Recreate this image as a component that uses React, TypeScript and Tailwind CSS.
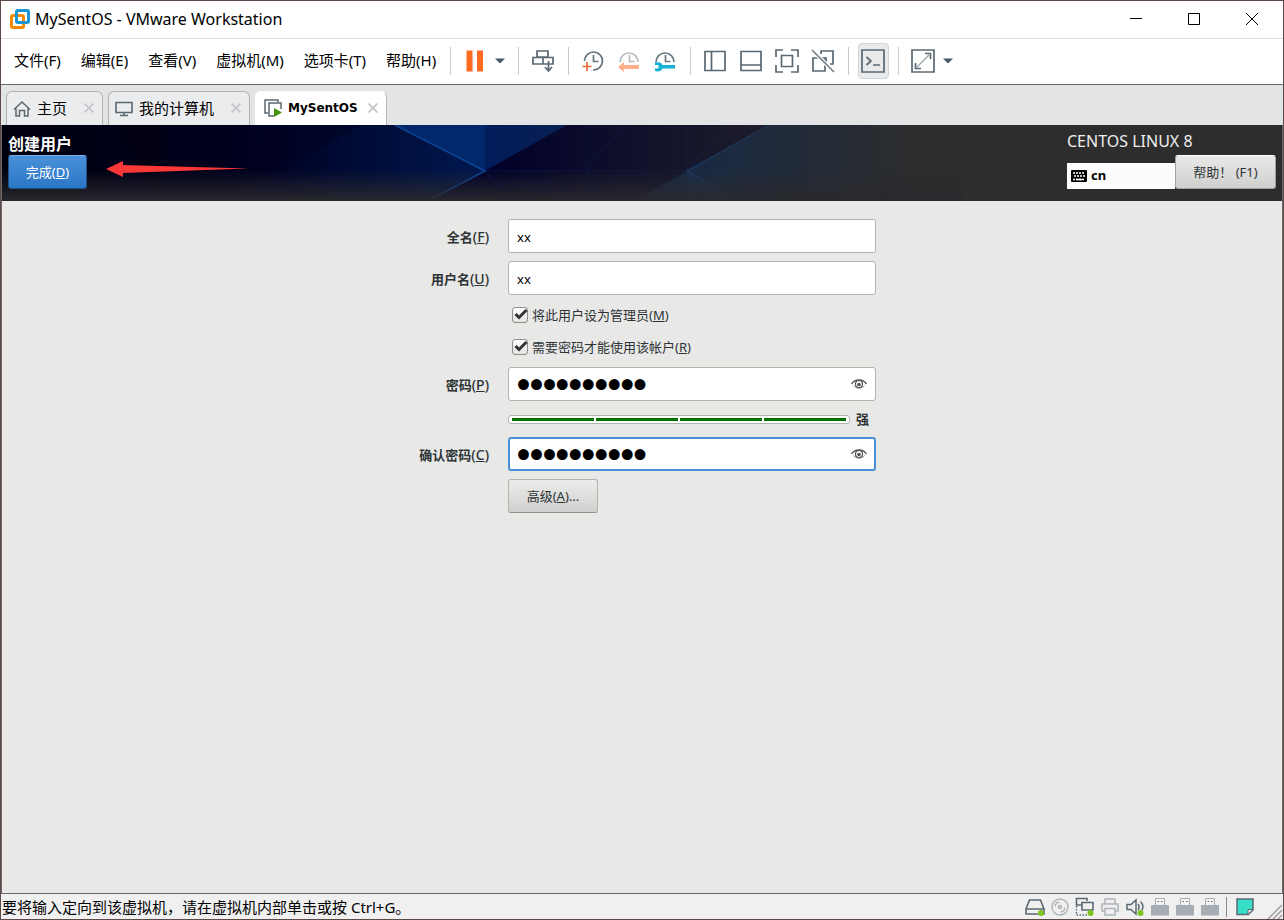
import { useState } from 'react'
import type { ReactNode } from 'react'
import clsx from 'clsx'

const MENUS = ['文件(F)', '编辑(E)', '查看(V)', '虚拟机(M)', '选项卡(T)', '帮助(H)']

interface IconProps {
  children: ReactNode
  size?: number
}

function Icon({ children, size = 24 }: IconProps) {
  return (
    <svg width={size} height={size} viewBox={`0 0 ${size} ${size}`} fill="none" stroke="#5a6872" strokeWidth="1.700" aria-hidden="true" className="shrink-0">
      {children}
    </svg>
  )
}

function ToolButton({ label, active, children }: { label: string; active?: boolean; children: ReactNode }) {
  return (
    <button type="button" aria-label={label} className="flex h-9 w-9 items-center justify-center">
      <span className={clsx('flex h-9 w-[31px] items-center justify-center rounded border', active ? 'border-[#d3d4d6] bg-[#e9eaec]' : 'border-transparent')}>
        {children}
      </span>
    </button>
  )
}

function Divider() {
  return <div className="mr-1.5 ml-[7px] h-7 w-px bg-[#c8c9cb]" />
}

function Caret({ label }: { label: string }) {
  return (
    <button type="button" aria-label={label} className="flex h-9 w-[18px] items-center pl-0.5">
      <svg width="10" height="6" viewBox="0 0 10 6" aria-hidden="true">
        <path d="M0 0.500h10L5 5.500z" fill="#465864" />
      </svg>
    </button>
  )
}

function Clock({ faded }: { faded?: boolean }) {
  return (
    <g stroke={faded ? '#b4bbc0' : '#66747d'}>
      <path d="M12.500 6v6.500h5" />
      <path d="M3 13a9 9 0 1 1 18 0" />
    </g>
  )
}

function TitleBar() {
  return (
    <header className="flex h-[38px] items-center border-b border-[#e0e0e0] pr-0.5 pb-0.5 pl-2">
      <svg width="22" height="22" viewBox="0 0 22 22" fill="none" strokeWidth="3" aria-hidden="true">
        <rect x="7.500" y="2.500" width="12" height="12" rx="1.500" stroke="#1c96d2" />
        <rect x="2.500" y="7.500" width="12" height="12" rx="1.500" stroke="#f38b00" />
        <path d="M7.500 6v5.500M12 14.500h4" stroke="#1c96d2" />
      </svg>
      <h1 className="ml-1 text-base leading-5">MySentOS - VMware Workstation</h1>
      <div className="ml-auto flex text-black">
        {[
          { label: '最小化', d: 'M0 5.500h12' },
          { label: '最大化', d: 'M0.500 0.500h11v11h-11z' },
          { label: '关闭', d: 'M0 0l12 12M12 0L0 12' },
        ].map((b) => (
          <button key={b.label} type="button" aria-label={b.label} className="flex h-9 w-[58px] items-center justify-center">
            <svg width="12" height="12" viewBox="0 0 12 12" fill="none" stroke="#000" aria-hidden="true">
              <path d={b.d} />
            </svg>
          </button>
        ))}
      </div>
    </header>
  )
}

function MenuBar() {
  return (
    <div className="flex h-[46px] items-center border-b border-[#6a6a6a] pb-0.5 pl-[13px]">
      <nav className="flex gap-5 pr-[7px] pb-0.5">
        {MENUS.map((m) => (
          <button key={m} type="button" className="text-[15px] leading-5 whitespace-nowrap">
            {m}
          </button>
        ))}
      </nav>
      <Divider />
      <ToolButton label="挂起">
        <Icon>
          <path d="M6.500 1.500v21M17 1.500v21" stroke="#fd6a21" strokeWidth="6" />
        </Icon>
      </ToolButton>
      <Caret label="电源选项" />
      <Divider />
      <ToolButton label="发送 Ctrl+Alt+Del">
        <Icon>
          <path d="M6 2h11v6H6zM2 8.500h20V15H2zM12 8.500V15" />
          <path d="M17.500 12v9M14 18l3.500 4 3.500-4" />
        </Icon>
      </ToolButton>
      <Divider />
      <ToolButton label="拍摄快照">
        <Icon>
          <g stroke="#66747d">
            <path d="M12.500 6v6.500h5" />
            <path d="M3.500 12a9 9 0 1 1 8.500 9" />
          </g>
          <path d="M6 13v9M1.500 17.500h9" stroke="#f0673a" />
        </Icon>
      </ToolButton>
      <ToolButton label="恢复快照">
        <Icon>
          <Clock faded />
          <path d="M1 18l6-5v3h15v4H7v3z" fill="#ffb08b" stroke="none" />
        </Icon>
      </ToolButton>
      <ToolButton label="管理快照">
        <Icon>
          <Clock />
          <path d="M2 13.500c4-1 7 .5 7.500 2.500H22v3.500H9.500c-1 2.500-4.500 3.500-7.500 2.500v-2.500h3.500V16H2z" fill="#14b2d4" stroke="none" />
        </Icon>
      </ToolButton>
      <Divider />
      <ToolButton label="显示库">
        <Icon>
          <path d="M2 2.500h20v19H2zM8.500 2v20" />
        </Icon>
      </ToolButton>
      <ToolButton label="显示缩略图栏">
        <Icon>
          <path d="M2 2.500h20v19H2zM2 16h20" />
        </Icon>
      </ToolButton>
      <ToolButton label="全屏">
        <Icon>
          <path d="M6.500 6.500h11v11h-11zM1 8V1h7M16 1h7v7M23 16v7h-7M8 23H1v-7" />
        </Icon>
      </ToolButton>
      <ToolButton label="Unity 模式">
        <Icon>
          <path d="M10 5V2h12v13h-3M14 9v13H2V9h5M9 9h6v5" />
          <path d="M1 1l22 22" stroke="#fff" strokeWidth="4" />
          <path d="M1 1l22 22" stroke="#77838b" />
        </Icon>
      </ToolButton>
      <Divider />
      <ToolButton label="控制台视图" active>
        <Icon>
          <path d="M1 1h22v22H1z" />
          <path d="M5.500 8l4.500 4-4.500 4M12 16h7" />
        </Icon>
      </ToolButton>
      <Divider />
      <ToolButton label="拉伸客户机">
        <Icon>
          <path d="M1 1h22v22H1z" />
          <path d="M14 4.500h5.500V10M4.500 14v5.500H10" />
          <path d="M6 18L19 5" stroke="#a0a9af" strokeWidth="1.500" />
        </Icon>
      </ToolButton>
      <Caret label="拉伸选项" />
    </div>
  )
}

function Tab({ label, active, icon }: { label: string; active?: boolean; icon: ReactNode }) {
  return (
    <div
      className={clsx(
        'flex h-[34px] items-center rounded-t-md border border-b-0 pr-2 pb-0.5',
        active ? 'border-white border-r-[#b5b6b8] bg-white pl-2' : 'border-[#b0b1b3] bg-[#ebecee] pl-1.5',
      )}
    >
      <button type="button" className="flex items-center gap-1.5 whitespace-nowrap">
        {icon}
        <span className={active ? 'font-["DejaVu_Sans"] text-xs font-bold' : 'text-[15px] leading-5'}>{label}</span>
      </button>
      <button type="button" aria-label={`关闭 ${label}`} className={clsx('flex w-[10px] justify-center', active ? 'ml-2.5' : 'ml-[17px]')}>
        <svg width="10" height="10" viewBox="0 0 10 10" stroke="#c6c7c9" strokeWidth="1.800" aria-hidden="true">
          <path d="M0.500 0.500l9 9M9.500 0.500l-9 9" />
        </svg>
      </button>
    </div>
  )
}

function TabBar() {
  return (
    <div className="flex h-10 items-end gap-[5px] bg-[#e3e4e6] pl-[5px]">
      <Tab
        label="主页"
        icon={
          <Icon size={18}>
            <path d="M1 10.500L9 3l8 7.500M3 9.500V17h3.500v-5.500h5V17H15V9.500" strokeWidth="1.500" />
          </Icon>
        }
      />
      <Tab
        label="我的计算机"
        icon={
          <Icon size={18}>
            <path d="M1 3.500h16v10H1zM9 13.500V17M5 16.500h8" strokeWidth="1.600" />
          </Icon>
        }
      />
      <Tab
        label="MySentOS"
        active
        icon={
          <Icon size={18}>
            <path d="M4 14H1V1h13v2M10 17H5V4h12v6" strokeWidth="1.500" />
            <path d="M10 9l8 4.500-8 4.500z" fill="#46960f" stroke="none" />
          </Icon>
        }
      />
    </div>
  )
}

function Backdrop() {
  return (
    <svg width="960" height="76" viewBox="0 0 960 76" aria-hidden="true" className="absolute top-0 left-0">
      <defs>
        <linearGradient id="base">
          <stop offset="0" stopColor="#00000f" />
          <stop offset="0.250" stopColor="#00001e" />
          <stop offset="0.380" stopColor="#000c38" />
          <stop offset="0.500" stopColor="#00184e" />
        </linearGradient>
        <linearGradient id="fadeRight">
          <stop offset="0.500" stopColor="#2d2d2d" stopOpacity="0" />
          <stop offset="0.700" stopColor="#2d2d2d" stopOpacity="0.450" />
          <stop offset="0.960" stopColor="#2d2d2d" />
        </linearGradient>
        <linearGradient id="fadeDown" x2="0" y2="1">
          <stop offset="0.580" stopColor="#2a292d" stopOpacity="0" />
          <stop offset="1" stopColor="#2a292d" stopOpacity="0.950" />
        </linearGradient>
      </defs>
      <rect width="960" height="76" fill="url(#base)" />
      <path d="M115 0h43v76z" fill="#000009" opacity="0.500" />
      <path d="M360 0L250 60l16-60z" fill="#00001f" opacity="0.400" />
      <path d="M393 0h90v46z" fill="#00286a" />
      <path d="M483 0h82l-82 46z" fill="#001c5a" />
      <path d="M565 0L483 46l-57 30h208l51-30 82-46z" fill="#00002a" />
      <path d="M960 0H767l-82 46-51 30h326z" fill="#052558" />
      <path d="M685 46v30h55z" fill="#083a78" opacity="0.500" />
      <g fill="none" stroke="#0a4596" strokeWidth="1.500">
        <path d="M393 0l90 46-57 30" />
        <path d="M767 0l-82 46 53 30" opacity="0.800" />
        <path d="M483 46h307M584 0v76M685 0v46M584 46l38-46M685 46l40-46M584 46l24 30M483 46l26 30" opacity="0.150" />
      </g>
      <rect width="960" height="76" fill="url(#fadeRight)" />
      <rect width="960" height="76" fill="url(#fadeDown)" />
    </svg>
  )
}

function InstallerHeader() {
  return (
    <div className="relative flex h-[76px] justify-between overflow-hidden bg-[#2d2d2d] px-1.5 pt-[7px]">
      <Backdrop />
      <div className="relative">
        <h2 className="h-[23px] text-base leading-6 font-bold text-white">创建用户</h2>
        <button
          type="button"
          className="h-[34px] w-[79px] rounded-[3px] border border-[#1c5187] border-t-[#75b0ea] bg-linear-to-b from-[#4a90d9] to-[#2a76c6] pt-0.5 text-[13px] text-white"
        >
          完成(<u>D</u>)
        </button>
      </div>
      <svg width="142" height="18" viewBox="0 0 142 18" aria-hidden="true" className="absolute top-[35px] left-[104px]">
        <path d="M0 9L17 1v4l125 3.500L17 13v4z" fill="#fb3838" />
      </svg>
      <div className="relative">
        <p className="h-[23px] text-base leading-[18px] text-[#eeeeee]">CENTOS LINUX 8</p>
        <div className="flex items-end">
          <button type="button" className="flex h-[26px] w-[108px] items-center gap-1 bg-[#fcfcfc] pl-1 text-[13px] font-bold">
            <svg width="16" height="12" viewBox="0 0 16 12" aria-hidden="true">
              <rect width="16" height="12" rx="1" fill="#000" />
              <path d="M2 3h12M3 6h11M2 9.500h12" stroke="#fff" strokeWidth="1.500" strokeDasharray="2 1" />
              <path d="M5 9.500h6" stroke="#fff" strokeWidth="1.500" />
            </svg>
            cn
          </button>
          <button
            type="button"
            className="h-[34px] w-[101px] rounded-[3px] border border-[#a1a19e] border-t-white bg-linear-to-b from-[#e9e9e8] to-[#cfcfcd] pt-0.5 text-[13px] text-[#2e3436]"
          >
            帮助！ (F1)
          </button>
        </div>
      </div>
    </div>
  )
}

function FieldLabel({ htmlFor, text, hotkey }: { htmlFor: string; text: string; hotkey: string }) {
  return (
    <label htmlFor={htmlFor} className="self-center pt-0.5 text-right text-[13px] font-bold whitespace-nowrap text-[#2e3436]">
      {text}
      <span className="text-sm font-medium">
        (<u>{hotkey}</u>)
      </span>
    </label>
  )
}

function CheckRow({ text, hotkey }: { text: string; hotkey: string }) {
  const [checked, setChecked] = useState(true)
  return (
    <label className="relative col-start-2 flex h-6 items-center gap-1 pl-1 text-[13px] text-[#2e3436]">
      <input
        type="checkbox"
        checked={checked}
        onChange={(e) => setChecked(e.target.checked)}
        className="h-4 w-4 appearance-none rounded-[3px] border border-[#8f8f8c] bg-linear-to-b from-white to-[#e4e4e2]"
      />
      {checked && (
        <svg width="16" height="16" viewBox="0 0 16 16" aria-hidden="true" className="pointer-events-none absolute top-1 left-1">
          <path d="M3.500 7l3.500 3.500 7.500-7.500" fill="none" stroke="#2e3436" strokeWidth="3" />
        </svg>
      )}
      <span className="pt-0.5">
        {text}(<u>{hotkey}</u>)
      </span>
    </label>
  )
}

function PasswordField({ id, focused }: { id: string; focused?: boolean }) {
  const [value, setValue] = useState('centos8888')
  const [visible, setVisible] = useState(false)
  return (
    <div className={clsx('flex h-[34px] items-center rounded-[3px] bg-white', focused ? 'border-2 border-[#4a90d9] px-[7px]' : 'border border-[#b3b3b0] px-2')}>
      <input
        id={id}
        type={visible ? 'text' : 'password'}
        value={value}
        onChange={(e) => setValue(e.target.value)}
        className={clsx(
          'h-full min-w-0 flex-1 bg-transparent pt-0.5 text-black outline-none',
          visible ? 'text-[13px]' : 'font-["Liberation_Serif"] text-[37px] [-webkit-text-stroke:2px_black]',
        )}
      />
      <button type="button" aria-label="显示密码" onClick={() => setVisible(!visible)}>
        <svg width="16" height="12" viewBox="0 0 16 12" fill="none" stroke="#4d5153" aria-hidden="true">
          <path d="M0.500 6C4 0.500 12 0.500 15.500 6" strokeWidth="1.300" />
          <circle cx="8" cy="6" r="3.500" strokeWidth="1.200" />
          <circle cx="8" cy="6.500" r="1.800" fill="#4d5153" stroke="none" />
          <path d="M2.500 7.500c3 3.500 8 3.500 11 0" strokeWidth="0.700" />
        </svg>
      </button>
    </div>
  )
}

function UserForm() {
  const [fullName, setFullName] = useState('xx')
  const [userName, setUserName] = useState('xx')
  const inputClass = 'h-[34px] rounded-[3px] border border-[#b3b3b0] bg-white px-2 pt-0.5 text-[13px] text-black'

  return (
    <form className="grid flex-1 grid-cols-[81px_368px] content-start justify-center gap-x-[19px] gap-y-2 bg-[#e8e8e7] pt-[18px]">
      <FieldLabel htmlFor="fullname" text="全名" hotkey="F" />
      <input id="fullname" type="text" value={fullName} onChange={(e) => setFullName(e.target.value)} className={inputClass} />

      <FieldLabel htmlFor="username" text="用户名" hotkey="U" />
      <input id="username" type="text" value={userName} onChange={(e) => setUserName(e.target.value)} className={inputClass} />

      <CheckRow text="将此用户设为管理员" hotkey="M" />
      <CheckRow text="需要密码才能使用该帐户" hotkey="R" />

      <FieldLabel htmlFor="password" text="密码" hotkey="P" />
      <PasswordField id="password" />

      <div className="col-start-2 flex h-5 items-center gap-1.5">
        <div role="meter" aria-label="密码强度" aria-valuenow={4} aria-valuemin={0} aria-valuemax={4} className="flex h-[9px] flex-1 items-center gap-0.5 rounded-[3px] border border-[#b3b3b0] bg-white px-[3px]">
          {[0, 1, 2, 3].map((i) => (
            <span key={i} className="h-[3px] flex-1 border-y border-[#005f00] bg-[#008a00]" />
          ))}
        </div>
        <span className="w-5 pt-0.5 text-[13px] font-bold text-[#2e3436]">强</span>
      </div>

      <FieldLabel htmlFor="confirm" text="确认密码" hotkey="C" />
      <PasswordField id="confirm" focused />

      <button
        type="button"
        className="col-start-2 h-[34px] w-[90px] rounded-[3px] border border-[#b3b3b0] border-b-[#8f8f8c] bg-linear-to-b from-[#ececeb] to-[#d0d0ce] pt-0.5 text-[13px] text-[#2e3436]"
      >
        高级(<u>A</u>)...
      </button>
    </form>
  )
}

function Usb() {
  return (
    <Icon size={20}>
      <path d="M5.500 1.500h9V9h-9z" fill="#f4f4f4" stroke="#a6adb3" strokeWidth="1" />
      <path d="M7.500 4.500H9M11 4.500h1.500" strokeWidth="1" />
      <path d="M1 9a1 1 0 0 1 1-1h16a1 1 0 0 1 1 1v9.500H1z" fill="#a6adb3" stroke="none" />
    </Icon>
  )
}

function StatusBar() {
  const devices = [
    {
      label: '硬盘',
      icon: (
        <Icon size={20}>
          <path d="M4.500 3h11L19 12v5H1v-5zM1 12h18" strokeWidth="1.600" />
          <circle cx="16" cy="16" r="3" fill="#7fc41c" stroke="none" />
        </Icon>
      ),
    },
    {
      label: 'CD/DVD',
      icon: (
        <Icon size={20}>
          <g stroke="#aeb4b9" strokeWidth="1.400">
            <circle cx="10" cy="10" r="8" />
            <circle cx="10" cy="10" r="1.500" />
            <path d="M5 9.500A5 5 0 0 1 9.500 5M15 10.500a5 5 0 0 1-4.500 4.500" />
          </g>
        </Icon>
      ),
    },
    {
      label: '网络适配器',
      icon: (
        <Icon size={20}>
          <path d="M7 8H1.500V1.500H12V4M7 5.500h11V13H7z" strokeWidth="1.600" />
          <path d="M1.500 9v9H13" strokeWidth="1.500" strokeDasharray="1.500 1.500" />
          <circle cx="15.500" cy="16" r="3" fill="#7fc41c" stroke="none" />
        </Icon>
      ),
    },
    {
      label: '打印机',
      icon: (
        <Icon size={20}>
          <path d="M5 7V2h10v5M5 14H2V7h16v7h-3M5 11.500h10V18H5z" stroke="#aeb4b9" strokeWidth="1.500" />
        </Icon>
      ),
    },
    {
      label: '声卡',
      icon: (
        <Icon size={20}>
          <path d="M2 7.500h4l5-4.500v14l-5-4.500H2zM13 7c1.500 2 1.500 4 0 6M15.500 4.500c3 3 3 7 1 9" strokeWidth="1.500" />
          <circle cx="15.500" cy="16" r="3" fill="#7fc41c" stroke="none" />
        </Icon>
      ),
    },
    { label: 'USB 1', icon: <Usb /> },
    { label: 'USB 2', icon: <Usb /> },
    { label: 'USB 3', icon: <Usb /> },
  ]

  return (
    <footer className="flex h-[26px] items-center border-t border-[#6a6a6a] bg-[#f0f0f0] pl-px">
      <p className="text-[15px] leading-5">要将输入定向到该虚拟机，请在虚拟机内部单击或按 Ctrl+G。</p>
      <div className="ml-auto flex items-center">
        {devices.map((d) => (
          <button key={d.label} type="button" aria-label={d.label} className="flex w-[25px] justify-center">
            {d.icon}
          </button>
        ))}
        <div className="mx-1 h-5 w-px bg-[#8a8a8a]" />
        <button type="button" aria-label="消息日志" className="ml-1">
          <Icon size={20}>
            <path d="M2 2h16v11l-4.500 4.500H2z" fill="#36dfc8" strokeWidth="1.500" />
            <path d="M18 12.500h-5v5z" fill="#f0f0f0" strokeWidth="1" />
          </Icon>
        </button>
      </div>
      <svg width="16" height="16" viewBox="0 0 16 16" stroke="#a0a0a0" strokeWidth="1.500" aria-hidden="true" className="ml-3 self-end">
        <path d="M1 16L15 2M6 16l9-9M11 16l4-4" />
      </svg>
    </footer>
  )
}

export default function App() {
  return (
    <div className='flex min-h-screen flex-col border border-[#5b4a46] bg-white font-["Noto_Sans","Noto_Sans_CJK_SC",sans-serif] text-black'>
      <TitleBar />
      <MenuBar />
      <TabBar />
      <main className="flex flex-1 flex-col border-x border-[#6a6a6a]">
        <InstallerHeader />
        <UserForm />
      </main>
      <StatusBar />
    </div>
  )
}
